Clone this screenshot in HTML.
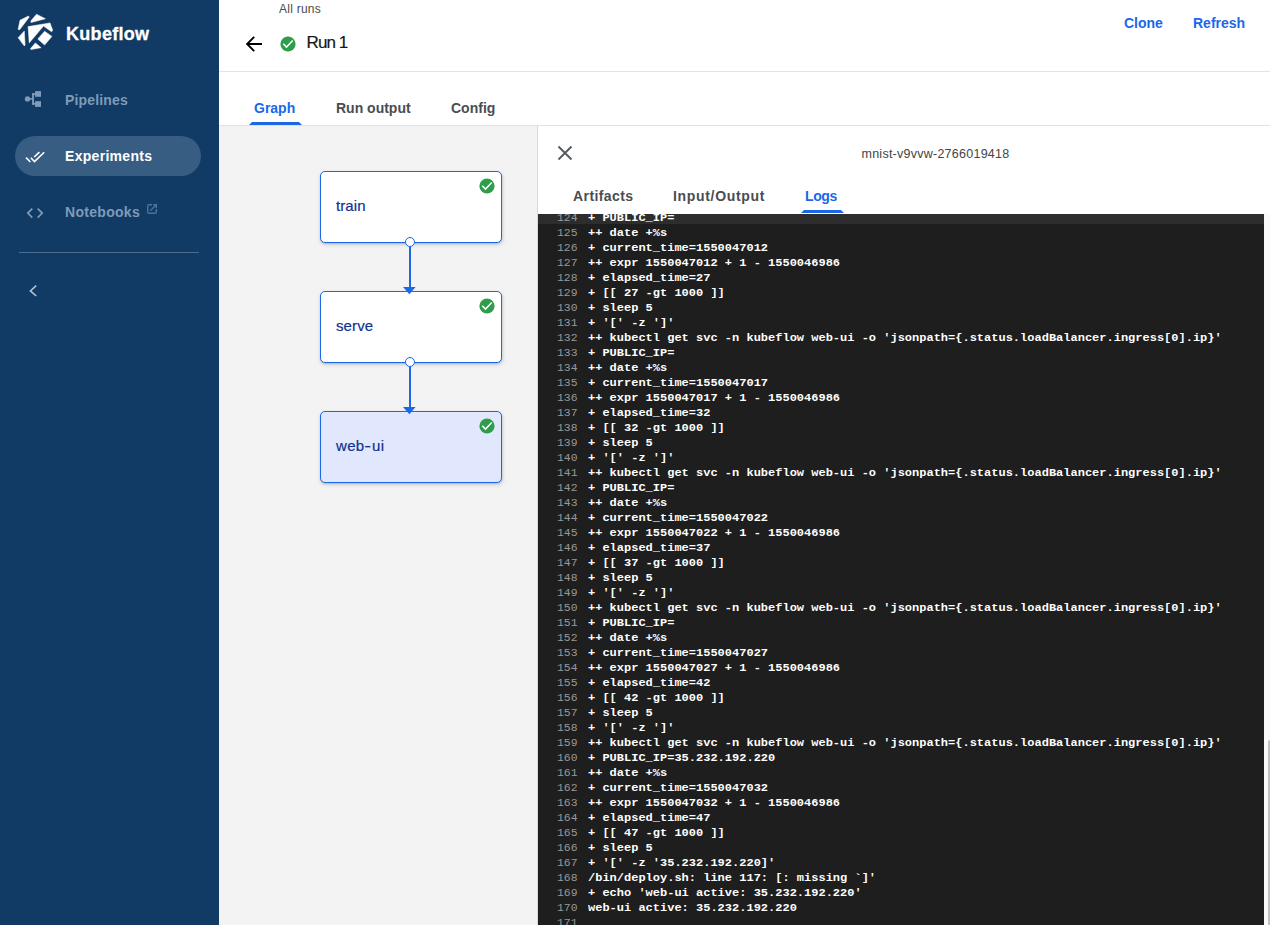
<!DOCTYPE html>
<html>
<head>
<meta charset="utf-8">
<title>Run 1</title>
<style>
*{box-sizing:border-box;margin:0;padding:0}
html,body{width:1270px;height:925px;overflow:hidden;background:#fff;font-family:"Liberation Sans",sans-serif;}
.abs{position:absolute}
#side{position:absolute;left:0;top:0;width:219px;height:925px;background:#113a65}
#side .brand{position:absolute;left:66px;top:22px;font-size:18px;font-weight:bold;color:#fff;letter-spacing:0.3px;-webkit-text-stroke:0.3px #fff;line-height:24px}
#side .item{position:absolute;left:65px;font-size:14px;font-weight:bold;color:#7f9bb8;line-height:20px;letter-spacing:0.3px}
#side .pill{position:absolute;left:15px;top:136px;width:186px;height:40px;border-radius:20px;background:#385d83}
#side .div{position:absolute;left:19px;top:252px;width:180px;height:1px;background:#4a6c90}
#head{position:absolute;left:219px;top:0;width:1051px;height:72px;background:#fff;border-bottom:1px solid #e4e4e4}
.crumb{position:absolute;left:279px;top:2px;font-size:12px;line-height:14px;color:#4a4a4a;letter-spacing:0.25px}
.title{position:absolute;left:306.5px;top:31px;font-size:17px;line-height:24px;color:#17181a;letter-spacing:-0.9px;-webkit-text-stroke:0.2px #17181a}
.btn{position:absolute;top:13px;font-size:14px;font-weight:bold;line-height:20px;color:#1a68e8}
.tab{position:absolute;font-size:14px;font-weight:bold;line-height:20px;color:#4a4d52}
.tab.sel{color:#1a68e8}
.ind{position:absolute;height:3px;background:#1a68e8;clip-path:polygon(3px 0,calc(100% - 3px) 0,100% 100%,0 100%)}
#graph{position:absolute;left:219px;top:125px;width:318px;height:800px;background:#f3f3f3;border-top:1px solid #e2e2e2}
.node{position:absolute;left:320px;width:182px;height:72px;border:1px solid #1a68e8;border-radius:5px;background:#fff;box-shadow:0 1px 2px rgba(60,64,67,.25),1px 2px 4px rgba(60,64,67,.15)}
.node.sel{background:#e1e8fd}
.node span{position:absolute;left:15px;top:24px;font-size:15px;line-height:20px;color:#10318f;letter-spacing:0.1px;white-space:nowrap;-webkit-text-stroke:0.2px #10318f}
.edge{position:absolute;left:409px;width:2px;background:#1a68e8}
.port{position:absolute;left:405px;width:10px;height:10px;border-radius:50%;background:#fff;border:1px solid #1a68e8}
#panel{position:absolute;left:537px;top:125px;width:733px;height:800px;background:#fff;border-left:1px solid #d9d9d9;border-top:1px solid #e2e2e2}
.pname{position:absolute;left:861.5px;top:146px;font-size:12.5px;line-height:16px;color:#444;letter-spacing:0.25px}
#log{position:absolute;left:538px;top:214px;width:726px;height:711px;background:#1e1e1e;overflow:hidden}
#log .band{position:absolute;left:0;top:0;width:726px;height:10px;background:#2d2d2d}
#log .rows{position:absolute;left:0;top:-3px;width:726px}
#log .r{height:15px;line-height:15px;font-family:"Liberation Mono",monospace;font-size:12px;white-space:pre;position:relative}
#log .n{position:absolute;left:19px;top:0;color:#999;transform:scale(0.95,0.92);transform-origin:0 10.5px}
#log .t{position:absolute;left:50px;top:0;color:#fff;font-weight:bold;transform:scaleY(0.92);transform-origin:0 10.5px}
#sb{position:absolute;left:1264px;top:214px;width:6px;height:711px;background:#fafafa;overflow:hidden}
#sb i{position:absolute;left:4px;top:526px;width:4px;height:200px;background:#c1c1c1;border-radius:2px}
</style>
</head>
<body>
<div id="side">
  <svg class="abs" style="left:10px;top:8px" width="50" height="50" viewBox="10 8 50 50">
    <g fill="#fff" stroke="#fff" stroke-width="0.5" stroke-linejoin="round">
      <polygon points="28.4,16.1 29.3,16.9 19.7,29.7 18.1,29.4 20,20.2"/>
      <polygon points="36.5,14.2 45.4,18.8 31.1,22.6 30.8,21"/>
      <polygon points="28.1,26.6 50,22.9 52.7,30.2 51.6,31.8 43.5,26.1 29.2,42.9"/>
      <polygon points="24.3,31 18.1,37.7 24.1,45.8 25.1,45.3"/>
      <polygon points="44.6,31.2 51.9,36.4 44.6,45 37.8,39.1"/>
      <polygon points="35.4,42.9 41.1,47.7 30.8,49.6 30.8,48.3"/>
    </g>
  </svg>
  <div class="brand">Kubeflow</div>

  <svg class="abs" style="left:15px;top:82px" width="50" height="40" viewBox="15 82 50 40">
    <g fill="#7f9bb8">
      <circle cx="27.5" cy="98.9" r="2.7"/>
      <rect x="35.1" y="91.1" width="5.9" height="5.7"/>
      <rect x="35.1" y="101.2" width="5.9" height="5.7"/>
      <rect x="32.1" y="93.2" width="1.9" height="11.5"/>
      <rect x="32.1" y="93.2" width="4" height="1.8"/>
      <rect x="32.1" y="102.9" width="4" height="1.8"/>
      <rect x="28" y="98.1" width="5" height="1.6"/>
    </g>
  </svg>
  <div class="item" style="top:90px;letter-spacing:0.15px">Pipelines</div>

  <div class="pill"></div>
  <svg class="abs" style="left:15px;top:136px" width="50" height="40" viewBox="15 136 50 40">
    <g fill="none" stroke="#fff" stroke-width="1.6">
      <path d="M26 157.6 L30.4 162"/>
      <path d="M30.8 157.8 L34.5 161.6 L44.2 152.2"/>
      <path d="M34.2 157 L39.4 152.2"/>
    </g>
  </svg>
  <div class="item" style="top:146px;color:#fff">Experiments</div>

  <svg class="abs" style="left:15px;top:192px" width="50" height="40" viewBox="15 192 50 40">
    <g fill="none" stroke="#7f9bb8" stroke-width="1.7">
      <path d="M32.3 208.6 L27.8 213.1 L32.3 217.6"/>
      <path d="M37.7 208.6 L42.2 213.1 L37.7 217.6"/>
    </g>
  </svg>
  <div class="item" style="top:202px">Notebooks</div>
  <svg class="abs" style="left:145px;top:202px" width="14" height="14" viewBox="145 202 14 14">
    <g fill="none" stroke="#4f7196" stroke-width="1.4">
      <path d="M152 204.8 H149 Q147.7 204.8 147.7 206.1 V212 Q147.7 213.3 149 213.3 H155 Q156.3 213.3 156.3 212 V209"/>
      <path d="M150.3 210.7 L156 205"/>
      <path d="M153.2 204.8 H156.3 V207.9" />
    </g>
  </svg>

  <div class="div"></div>
  <svg class="abs" style="left:25px;top:281px" width="16" height="20" viewBox="25 281 16 20">
    <path d="M36.2 285.7 L30.4 290.9 L36.2 296" fill="none" stroke="#b3c2d2" stroke-width="1.6"/>
  </svg>
</div>

<div id="head"></div>
<div class="crumb">All runs</div>
<svg class="abs" style="left:244px;top:34px" width="20" height="20" viewBox="244 34 20 20">
  <path d="M262 44 H248 M254.2 36.9 L247.1 44 L254.2 51.1" fill="none" stroke="#000" stroke-width="1.9"/>
</svg>
<svg class="abs" style="left:280px;top:36px" width="16" height="16" viewBox="0 0 16 16">
  <circle cx="8" cy="8" r="7.6" fill="#2f9e4a"/>
  <path d="M3.3 7.7 L6.5 11.1 L12.7 4.6" fill="none" stroke="#fff" stroke-width="1.5"/>
</svg>
<div class="title">Run 1</div>
<div class="btn" style="left:1124px">Clone</div>
<div class="btn" style="left:1193px">Refresh</div>

<div class="tab sel" style="left:254px;top:98px">Graph</div>
<div class="tab" style="left:336px;top:98px">Run output</div>
<div class="tab" style="left:451px;top:98px">Config</div>
<div class="ind" style="left:249px;top:122px;width:53px"></div>

<div id="graph"></div>
<div class="edge" style="top:243px;height:46px"></div>
<div class="edge" style="top:363px;height:46px"></div>
<div class="node" style="top:171px"><span>train</span></div>
<div class="node" style="top:291px"><span>serve</span></div>
<div class="node sel" style="top:411px"><span style="letter-spacing:0.3px">web<b style="display:inline-block;width:7.6px;text-align:center;font-weight:normal;transform:scaleX(1.35)">-</b>ui</span></div>
<svg class="abs" style="left:402px;top:285px" width="16" height="10" viewBox="402 285 16 10"><polygon points="403,287 415.6,287 409.4,294.2" fill="#1a68e8"/></svg>
<svg class="abs" style="left:402px;top:405px" width="16" height="10" viewBox="402 405 16 10"><polygon points="403,407 415.6,407 409.4,414.2" fill="#1a68e8"/></svg>
<div class="port" style="top:237px"></div>
<div class="port" style="top:357px"></div>
<svg class="abs" style="left:479px;top:178px" width="16" height="16" viewBox="0 0 16 16"><circle cx="8" cy="8" r="7.6" fill="#2f9e4a"/><path d="M3.3 7.7 L6.5 11.1 L12.7 4.6" fill="none" stroke="#fff" stroke-width="1.5"/></svg>
<svg class="abs" style="left:479px;top:298px" width="16" height="16" viewBox="0 0 16 16"><circle cx="8" cy="8" r="7.6" fill="#2f9e4a"/><path d="M3.3 7.7 L6.5 11.1 L12.7 4.6" fill="none" stroke="#fff" stroke-width="1.5"/></svg>
<svg class="abs" style="left:479px;top:418px" width="16" height="16" viewBox="0 0 16 16"><circle cx="8" cy="8" r="7.6" fill="#2f9e4a"/><path d="M3.3 7.7 L6.5 11.1 L12.7 4.6" fill="none" stroke="#fff" stroke-width="1.5"/></svg>

<div id="panel"></div>
<svg class="abs" style="left:556px;top:144px" width="18" height="18" viewBox="556 144 18 18">
  <path d="M558.5 146.5 L571.5 159.5 M571.5 146.5 L558.5 159.5" fill="none" stroke="#55595f" stroke-width="1.9"/>
</svg>
<div class="pname">mnist-v9vvw-2766019418</div>
<div class="tab" style="left:573px;top:186px;letter-spacing:0.42px">Artifacts</div>
<div class="tab" style="left:673px;top:186px;letter-spacing:0.68px">Input/Output</div>
<div class="tab sel" style="left:805px;top:186px;letter-spacing:-0.4px">Logs</div>
<div class="ind" style="left:801px;top:210px;width:43px"></div>

<div id="log">
<div class="band"></div>
<div class="rows">
<div class="r"><span class="n">124</span><span class="t">+ PUBLIC_IP=</span></div>
<div class="r"><span class="n">125</span><span class="t">++ date +%s</span></div>
<div class="r"><span class="n">126</span><span class="t">+ current_time=1550047012</span></div>
<div class="r"><span class="n">127</span><span class="t">++ expr 1550047012 + 1 - 1550046986</span></div>
<div class="r"><span class="n">128</span><span class="t">+ elapsed_time=27</span></div>
<div class="r"><span class="n">129</span><span class="t">+ [[ 27 -gt 1000 ]]</span></div>
<div class="r"><span class="n">130</span><span class="t">+ sleep 5</span></div>
<div class="r"><span class="n">131</span><span class="t">+ '[' -z ']'</span></div>
<div class="r"><span class="n">132</span><span class="t">++ kubectl get svc -n kubeflow web-ui -o 'jsonpath={.status.loadBalancer.ingress[0].ip}'</span></div>
<div class="r"><span class="n">133</span><span class="t">+ PUBLIC_IP=</span></div>
<div class="r"><span class="n">134</span><span class="t">++ date +%s</span></div>
<div class="r"><span class="n">135</span><span class="t">+ current_time=1550047017</span></div>
<div class="r"><span class="n">136</span><span class="t">++ expr 1550047017 + 1 - 1550046986</span></div>
<div class="r"><span class="n">137</span><span class="t">+ elapsed_time=32</span></div>
<div class="r"><span class="n">138</span><span class="t">+ [[ 32 -gt 1000 ]]</span></div>
<div class="r"><span class="n">139</span><span class="t">+ sleep 5</span></div>
<div class="r"><span class="n">140</span><span class="t">+ '[' -z ']'</span></div>
<div class="r"><span class="n">141</span><span class="t">++ kubectl get svc -n kubeflow web-ui -o 'jsonpath={.status.loadBalancer.ingress[0].ip}'</span></div>
<div class="r"><span class="n">142</span><span class="t">+ PUBLIC_IP=</span></div>
<div class="r"><span class="n">143</span><span class="t">++ date +%s</span></div>
<div class="r"><span class="n">144</span><span class="t">+ current_time=1550047022</span></div>
<div class="r"><span class="n">145</span><span class="t">++ expr 1550047022 + 1 - 1550046986</span></div>
<div class="r"><span class="n">146</span><span class="t">+ elapsed_time=37</span></div>
<div class="r"><span class="n">147</span><span class="t">+ [[ 37 -gt 1000 ]]</span></div>
<div class="r"><span class="n">148</span><span class="t">+ sleep 5</span></div>
<div class="r"><span class="n">149</span><span class="t">+ '[' -z ']'</span></div>
<div class="r"><span class="n">150</span><span class="t">++ kubectl get svc -n kubeflow web-ui -o 'jsonpath={.status.loadBalancer.ingress[0].ip}'</span></div>
<div class="r"><span class="n">151</span><span class="t">+ PUBLIC_IP=</span></div>
<div class="r"><span class="n">152</span><span class="t">++ date +%s</span></div>
<div class="r"><span class="n">153</span><span class="t">+ current_time=1550047027</span></div>
<div class="r"><span class="n">154</span><span class="t">++ expr 1550047027 + 1 - 1550046986</span></div>
<div class="r"><span class="n">155</span><span class="t">+ elapsed_time=42</span></div>
<div class="r"><span class="n">156</span><span class="t">+ [[ 42 -gt 1000 ]]</span></div>
<div class="r"><span class="n">157</span><span class="t">+ sleep 5</span></div>
<div class="r"><span class="n">158</span><span class="t">+ '[' -z ']'</span></div>
<div class="r"><span class="n">159</span><span class="t">++ kubectl get svc -n kubeflow web-ui -o 'jsonpath={.status.loadBalancer.ingress[0].ip}'</span></div>
<div class="r"><span class="n">160</span><span class="t">+ PUBLIC_IP=35.232.192.220</span></div>
<div class="r"><span class="n">161</span><span class="t">++ date +%s</span></div>
<div class="r"><span class="n">162</span><span class="t">+ current_time=1550047032</span></div>
<div class="r"><span class="n">163</span><span class="t">++ expr 1550047032 + 1 - 1550046986</span></div>
<div class="r"><span class="n">164</span><span class="t">+ elapsed_time=47</span></div>
<div class="r"><span class="n">165</span><span class="t">+ [[ 47 -gt 1000 ]]</span></div>
<div class="r"><span class="n">166</span><span class="t">+ sleep 5</span></div>
<div class="r"><span class="n">167</span><span class="t">+ '[' -z '35.232.192.220]'</span></div>
<div class="r"><span class="n">168</span><span class="t">/bin/deploy.sh: line 117: [: missing `]'</span></div>
<div class="r"><span class="n">169</span><span class="t">+ echo 'web-ui active: 35.232.192.220'</span></div>
<div class="r"><span class="n">170</span><span class="t">web-ui active: 35.232.192.220</span></div>
<div class="r"><span class="n">171</span><span class="t"></span></div>
</div>
</div>
<div id="sb"><i></i></div>
</body>
</html>
